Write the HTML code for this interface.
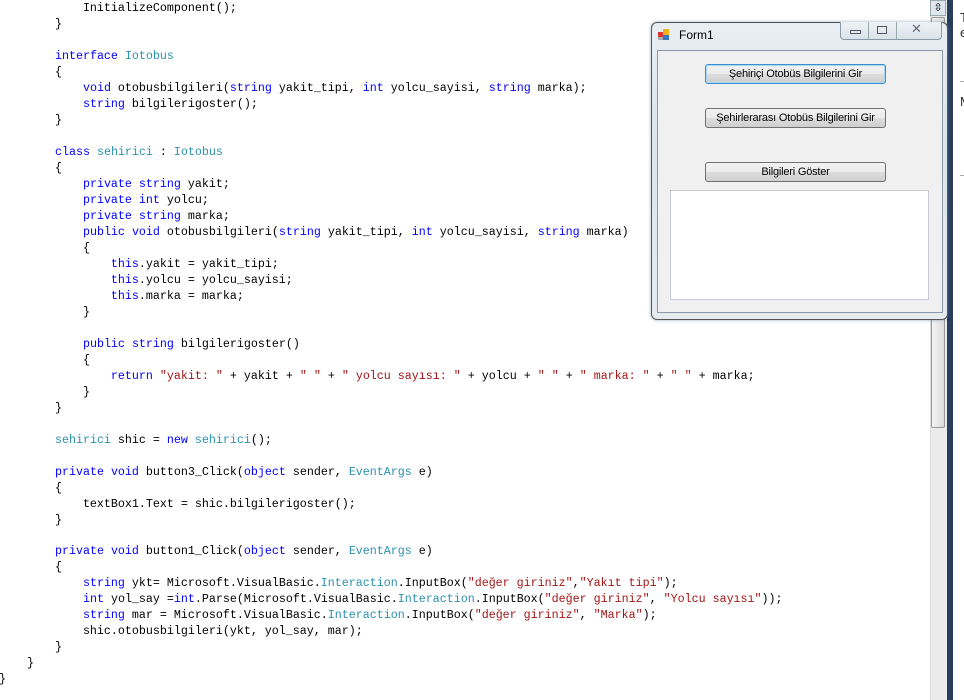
<!DOCTYPE html>
<html><head><meta charset="utf-8"><style>
html,body{margin:0;padding:0;width:964px;height:700px;overflow:hidden;background:#fff;position:relative}
pre{margin:0;position:absolute;left:-1px;top:1px;font-family:"Liberation Mono",monospace;font-size:11.67px;line-height:15.98px;color:#000}
.k{color:#0000ff}.t{color:#2b91af}.s{color:#a31515}
.sb{position:absolute;left:930px;top:0;width:16px;height:700px;background:#ebebeb;border-left:1px solid #ddd}
.thumb{position:absolute;left:931px;top:17px;width:14px;height:411px;background:linear-gradient(90deg,#f4f4f4,#dcdcdc);border:1px solid #999;box-sizing:border-box;border-radius:2px}
.up{position:absolute;left:930px;top:0;width:16px;height:16px;background:#dfe6ee;border:1px solid #9aa;box-sizing:border-box;font:11px "DejaVu Sans";text-align:center;line-height:14px}
.dark{position:absolute;left:947px;top:0;width:6px;height:700px;background:#2b3d5c}
.rp{position:absolute;left:953px;top:0;width:11px;height:700px;background:#fff;font:13px "Liberation Sans",sans-serif;color:#333}
.win{position:absolute;left:651px;top:22px;width:297px;height:298px;box-sizing:border-box;border:1px solid #555;border-radius:6px;background:linear-gradient(180deg,#e9eef3,#dde4ea 40%,#e6ebf0);box-shadow:0 0 3px rgba(80,120,160,.6)}
.client{position:absolute;left:657px;top:50px;width:286px;height:263px;box-sizing:border-box;border:1px solid #8a99a8;background:#f0f0f0}
.btn{position:absolute;left:705px;width:181px;height:20px;box-sizing:border-box;border:1px solid #707070;border-radius:3px;background:linear-gradient(180deg,#f2f2f2 0%,#ebebeb 50%,#dddddd 51%,#cfcfcf 100%);font:11px "Liberation Sans",sans-serif;text-align:center;line-height:18px;color:#000;letter-spacing:-0.2px}
.tb{position:absolute;left:670px;top:190px;width:259px;height:110px;background:#fff;border:1px solid #c8ccd2;box-sizing:border-box}
.ctl{position:absolute;left:840px;top:22px;width:102px;height:18px;box-sizing:border-box;border:1px solid #8a99a8;border-top:none;border-radius:0 0 4px 4px;background:linear-gradient(180deg,#eef2f6,#dbe2e9)}
</style></head><body>
<pre>            InitializeComponent();
        }

        <span class="k">interface</span> <span class="t">Iotobus</span>
        {
            <span class="k">void</span> otobusbilgileri(<span class="k">string</span> yakit_tipi, <span class="k">int</span> yolcu_sayisi, <span class="k">string</span> marka);
            <span class="k">string</span> bilgilerigoster();
        }

        <span class="k">class</span> <span class="t">sehirici</span> : <span class="t">Iotobus</span>
        {
            <span class="k">private</span> <span class="k">string</span> yakit;
            <span class="k">private</span> <span class="k">int</span> yolcu;
            <span class="k">private</span> <span class="k">string</span> marka;
            <span class="k">public</span> <span class="k">void</span> otobusbilgileri(<span class="k">string</span> yakit_tipi, <span class="k">int</span> yolcu_sayisi, <span class="k">string</span> marka)
            {
                <span class="k">this</span>.yakit = yakit_tipi;
                <span class="k">this</span>.yolcu = yolcu_sayisi;
                <span class="k">this</span>.marka = marka;
            }

            <span class="k">public</span> <span class="k">string</span> bilgilerigoster()
            {
                <span class="k">return</span> <span class="s">"yakit: "</span> + yakit + <span class="s">" "</span> + <span class="s">" yolcu sayısı: "</span> + yolcu + <span class="s">" "</span> + <span class="s">" marka: "</span> + <span class="s">" "</span> + marka;
            }
        }

        <span class="t">sehirici</span> shic = <span class="k">new</span> <span class="t">sehirici</span>();

        <span class="k">private</span> <span class="k">void</span> button3_Click(<span class="k">object</span> sender, <span class="t">EventArgs</span> e)
        {
            textBox1.Text = shic.bilgilerigoster();
        }

        <span class="k">private</span> <span class="k">void</span> button1_Click(<span class="k">object</span> sender, <span class="t">EventArgs</span> e)
        {
            <span class="k">string</span> ykt= Microsoft.VisualBasic.<span class="t">Interaction</span>.InputBox(<span class="s">"değer giriniz"</span>,<span class="s">"Yakıt tipi"</span>);
            <span class="k">int</span> yol_say =<span class="k">int</span>.Parse(Microsoft.VisualBasic.<span class="t">Interaction</span>.InputBox(<span class="s">"değer giriniz"</span>, <span class="s">"Yolcu sayısı"</span>));
            <span class="k">string</span> mar = Microsoft.VisualBasic.<span class="t">Interaction</span>.InputBox(<span class="s">"değer giriniz"</span>, <span class="s">"Marka"</span>);
            shic.otobusbilgileri(ykt, yol_say, mar);
        }
    }
}</pre>
<div class="sb"></div>
<div class="up">⇳</div>
<div class="thumb"></div>
<div class="dark"></div>
<div class="rp"><div style="position:absolute;left:7px;top:10px">T</div><div style="position:absolute;left:7px;top:25px">e</div><div style="position:absolute;left:7px;top:81px;width:10px;border-top:1px solid #aaa"></div><div style="position:absolute;left:7px;top:94px">M</div><div style="position:absolute;left:7px;top:175px;width:10px;border-top:1px solid #aaa"></div></div>
<div class="win"></div>
<div class="ctl"><div style="position:absolute;left:27px;top:0;height:17px;border-left:1px solid #9aa"></div><div style="position:absolute;left:55px;top:0;height:17px;border-left:1px solid #9aa"></div>
<div style="position:absolute;left:9px;top:8px;width:11px;height:4px;border:1px solid #556;box-sizing:border-box"></div>
<div style="position:absolute;left:36px;top:4px;width:10px;height:8px;border:1px solid #556;box-sizing:border-box"></div>
<div style="position:absolute;left:70px;top:0;font:13px 'DejaVu Sans';color:#667">✕</div></div>
<svg style="position:absolute;left:658px;top:29px" width="12" height="12"><rect x="0" y="3" width="5" height="5" fill="#d33"/><rect x="5" y="0" width="6" height="6" fill="#f2b21a"/><rect x="5" y="6" width="6" height="5" fill="#3a72c8"/><rect x="0" y="8" width="5" height="3" fill="#aaa"/></svg>
<div style="position:absolute;left:679px;top:28px;font:12px 'Liberation Sans',sans-serif;color:#000">Form1</div>
<div class="client"></div>
<div class="btn" style="top:64px;border-color:#3c8fce;box-shadow:inset 0 0 0 1px #a6d8f5">Şehiriçi Otobüs Bilgilerini Gir</div>
<div class="btn" style="top:108px">Şehirlerarası Otobüs Bilgilerini Gir</div>
<div class="btn" style="top:162px">Bilgileri Göster</div>
<div class="tb"></div>
</body></html>
